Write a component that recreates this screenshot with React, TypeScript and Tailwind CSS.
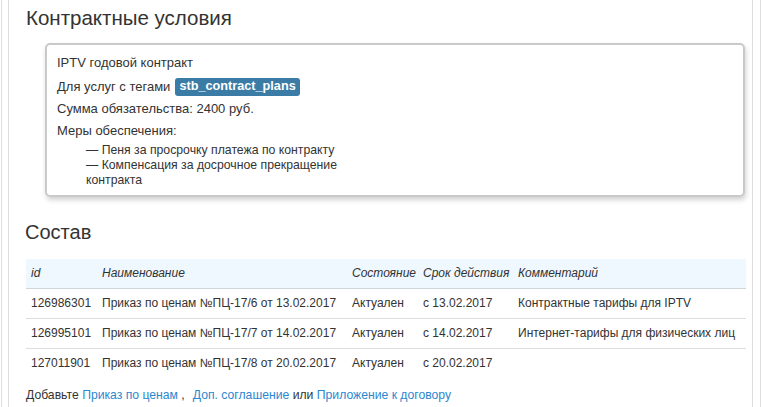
import React from 'react';

interface Row {
  id: string;
  name: string;
  state: string;
  term: string;
  comment: string;
}

const rows: Row[] = [
  { id: '126986301', name: 'Приказ по ценам №ПЦ-17/6 от 13.02.2017', state: 'Актуален', term: 'с 13.02.2017', comment: 'Контрактные тарифы для IPTV' },
  { id: '126995101', name: 'Приказ по ценам №ПЦ-17/7 от 14.02.2017', state: 'Актуален', term: 'с 14.02.2017', comment: 'Интернет-тарифы для физических лиц' },
  { id: '127011901', name: 'Приказ по ценам №ПЦ-17/8 от 20.02.2017', state: 'Актуален', term: 'с 20.02.2017', comment: '' }
];

export default function App() {
  return (
    <div className="w-[762px] h-[407px] overflow-hidden bg-white text-[#333] text-[12px] font-['Liberation_Sans',Arial,sans-serif]">
      <div className="mx-px h-full border-x border-[#dedede] pl-[6px] pr-[7px]">
        <div className="h-full border-x border-[#dcdcdc]">
          {/* Контрактные условия */}
          <h2 className="pl-[17px] pt-[5px] text-[20.5px] leading-[26px] text-[#333]">Контрактные условия</h2>

          <div className="ml-[36px] mr-[7px] mt-[12px] h-[154px] rounded-[5px] border-2 border-[#c9c9c9] shadow-[1px_3px_5px_rgba(0,0,0,0.18)] pl-[10px] pt-[7px] text-[13px]">
            <div className="h-[22px] flex items-center">IPTV годовой контракт</div>
            <div className="h-[26px] flex items-center">
              Для услуг с тегами
              <span className="ml-[5px] rounded-[3px] bg-[#3a7ca5] px-[4px] h-[18px] flex items-center font-bold text-[12.7px] text-white">stb_contract_plans</span>
            </div>
            <div className="h-[18px] flex items-center">Сумма обязательства: 2400 руб.</div>
            <div className="mt-[4px] h-[18px] flex items-center">Меры обеспечения:</div>
            <ul className="mt-[3px] ml-[29px] w-[254px] text-[12.25px] leading-[15px]">
              <li>— Пеня за просрочку платежа по контракту</li>
              <li>— Компенсация за досрочное прекращение контракта</li>
            </ul>
          </div>

          {/* Состав */}
          <h2 className="pl-[16px] mt-[22px] text-[20px] leading-[26px] text-[#333]">Состав</h2>

          <table className="ml-[17px] mt-[14px] w-[720px] table-fixed border-collapse">
            <colgroup>
              <col className="w-[71px]" />
              <col className="w-[250px]" />
              <col className="w-[71px]" />
              <col className="w-[95px]" />
              <col />
            </colgroup>
            <thead>
              <tr className="h-[29px] bg-[#eef8fe] border-b border-[#cfd6da] italic text-left">
                <th className="px-[5px] font-normal text-left whitespace-nowrap">id</th>
                <th className="px-[5px] font-normal text-left whitespace-nowrap">Наименование</th>
                <th className="px-[5px] font-normal text-left whitespace-nowrap">Состояние</th>
                <th className="px-[5px] font-normal text-left whitespace-nowrap">Срок действия</th>
                <th className="px-[5px] font-normal text-left whitespace-nowrap">Комментарий</th>
              </tr>
            </thead>
            <tbody>
              {rows.map((r, i) => (
                <tr key={r.id} className={i > 0 ? 'h-[30px] border-t border-[#dddddd]' : 'h-[30px]'}>
                  <td className="px-[5px] whitespace-nowrap">{r.id}</td>
                  <td className="px-[5px] whitespace-nowrap">{r.name}</td>
                  <td className="px-[5px] whitespace-nowrap">{r.state}</td>
                  <td className="px-[5px] whitespace-nowrap">{r.term}</td>
                  <td className="px-[5px] whitespace-nowrap">{r.comment}</td>
                </tr>
              ))}
            </tbody>
          </table>

          <div className="ml-[17px] mt-[8px] leading-[18px] text-[12.2px]">
            Добавьте <a className="text-[#2b87cf]">Приказ по ценам</a> ,
            <a className="ml-[8px] text-[#2b87cf]">Доп. соглашение</a> или{' '}
            <a className="text-[#2b87cf]">Приложение к договору</a>
          </div>
        </div>
      </div>
    </div>
  );
}
